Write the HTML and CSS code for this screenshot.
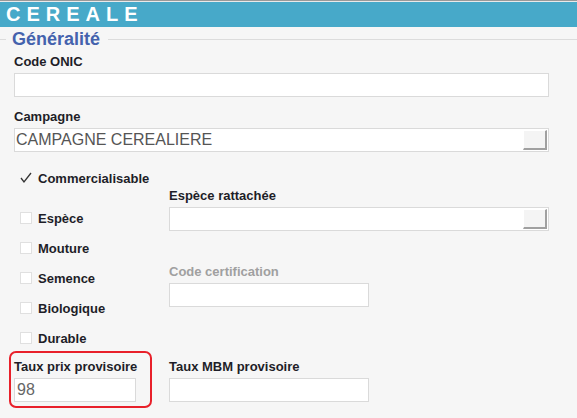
FILE: index.html
```
<!DOCTYPE html>
<html lang="fr">
<head>
    <meta charset="UTF-8">
    <meta name="viewport" content="width=device-width, initial-scale=1.0">
    <title>Cereale</title>

    <link rel="stylesheet" href="styles.css">
</head>
<body>
    <div class="title-bar">CEREALE</div>

    <div class="section-title"><span>Généralité</span></div>

    <div class="form">
        <div class="field">
            <label class="field-label">Code ONIC</label>
            <input class="text-input" type="text" value="">
        </div>

        <div class="field field-spaced">
            <label class="field-label">Campagne</label>
            <div class="lookup">
                <input type="text" value="CAMPAGNE CEREALIERE">
                <button class="lookup-btn" type="button"></button>
            </div>
        </div>

        <div class="columns">
            <ul class="checklist">
                <li class="checked">
                    <svg class="check" width="12" height="12" viewBox="0 0 12 12">
                        <polyline points="1,6 4,10 11,1" fill="none" stroke="#333" stroke-width="1.3"/>
                    </svg>
                    Commercialisable
                </li>
                <li><span class="box"></span>Espèce</li>
                <li><span class="box"></span>Mouture</li>
                <li><span class="box"></span>Semence</li>
                <li><span class="box"></span>Biologique</li>
                <li><span class="box"></span>Durable</li>
            </ul>

            <div class="side">
                <div class="field espece">
                    <label class="field-label">Espèce rattachée</label>
                    <div class="lookup">
                        <input type="text" value="">
                        <button class="lookup-btn" type="button"></button>
                    </div>
                </div>
                <div class="field certif">
                    <label class="field-label disabled">Code certification</label>
                    <input class="text-input short" type="text" value="">
                </div>
            </div>
        </div>

        <div class="bottom-row">
            <div class="field highlight">
                <label class="field-label">Taux prix provisoire</label>
                <input class="text-input tiny" type="text" value="98">
            </div>
            <div class="field mbm">
                <label class="field-label">Taux MBM provisoire</label>
                <input class="text-input short" type="text" value="">
            </div>
        </div>
    </div>
</body>
</html>
```
FILE: styles.css
```
body{
    margin: 0;
    background-color: #f6f6f6;
    font-family: "Liberation Sans", Arial, sans-serif;
    color: #1e1e28;
}

.title-bar{
    border-top: 1px solid #999;
    padding: 1px 0 0 6px;
    height: 25px;
    line-height: 25px;
    background: linear-gradient(#e9e9e9 1px, #47a9c9 1px);
    color: white;
    font-size: 20px;
    font-weight: bold;
    letter-spacing: 6px;
}

.section-title{
    margin-top: 1px;
    height: 22px;
    display: flex;
    align-items: center;
}

.section-title::before,
.section-title::after{
    content: "";
    height: 1px;
    background-color: #dcdcdc;
}

.section-title::before{
    width: 6px;
}

.section-title::after{
    flex: 1;
}

.section-title span{
    padding: 0 8px 0 6px;
    font-size: 18px;
    line-height: 22px;
    font-weight: bold;
    color: #4462ad;
}

.form{
    padding: 4px 28px 0 14px;
}

.field-label{
    display: block;
    font-size: 13px;
    line-height: 16px;
    font-weight: bold;
    margin-bottom: 3px;
}

.field-label.disabled{
    color: #a0a0a0;
}

.field-spaced{
    margin-top: 12px;
}

.text-input{
    display: block;
    box-sizing: border-box;
    width: 100%;
    height: 24px;
    border: 1px solid #dadada;
    background-color: white;
    padding: 0 2px;
    margin: 0;
    font-family: "Liberation Sans", Arial, sans-serif;
    font-size: 16px;
    color: #666;
    outline: none;
}

.text-input.short{
    width: 200px;
}

.text-input.tiny{
    width: 122px;
}

.lookup{
    box-sizing: border-box;
    height: 24px;
    border: 1px solid #dadada;
    background-color: white;
    display: flex;
    align-items: center;
    padding-right: 1px;
}

.lookup input{
    flex: 1;
    min-width: 0;
    height: 100%;
    border: 0;
    padding: 0 1px;
    background: transparent;
    font-family: "Liberation Sans", Arial, sans-serif;
    font-size: 16px;
    color: #555;
    outline: none;
}

.lookup-btn{
    width: 24px;
    height: 20px;
    padding: 0;
    background-color: #f4f4f4;
    border-style: solid;
    border-width: 1px 2px 2px 1px;
    border-color: white #a0a0a0 #a0a0a0 white;
    cursor: pointer;
}

.columns{
    margin-top: 14px;
    display: grid;
    grid-template-columns: 155px 1fr;
}

.checklist{
    list-style: none;
    margin: 0;
    padding: 0 0 0 6px;
    display: flex;
    flex-direction: column;
    gap: 6px;
}

.checklist li{
    height: 24px;
    display: flex;
    align-items: center;
    gap: 6px;
    font-size: 13px;
    font-weight: bold;
}

.checklist li.checked{
    margin-bottom: 10px;
}

.checklist .box{
    box-sizing: border-box;
    width: 12px;
    height: 12px;
    border: 1px solid #e0e0e0;
    background-color: white;
}

.espece{
    margin-top: 22px;
}

.certif{
    margin-top: 33px;
}

.bottom-row{
    margin-top: 1px;
    display: flex;
    align-items: flex-start;
}

.highlight{
    box-sizing: border-box;
    width: 143px;
    margin-left: -5px;
    padding: 6px 3px 4px 3px;
    border: 2px solid #e8202a;
    border-radius: 7px;
}

.highlight .field-label{
    white-space: nowrap;
}

.mbm{
    margin: 8px 0 0 17px;
}
```
